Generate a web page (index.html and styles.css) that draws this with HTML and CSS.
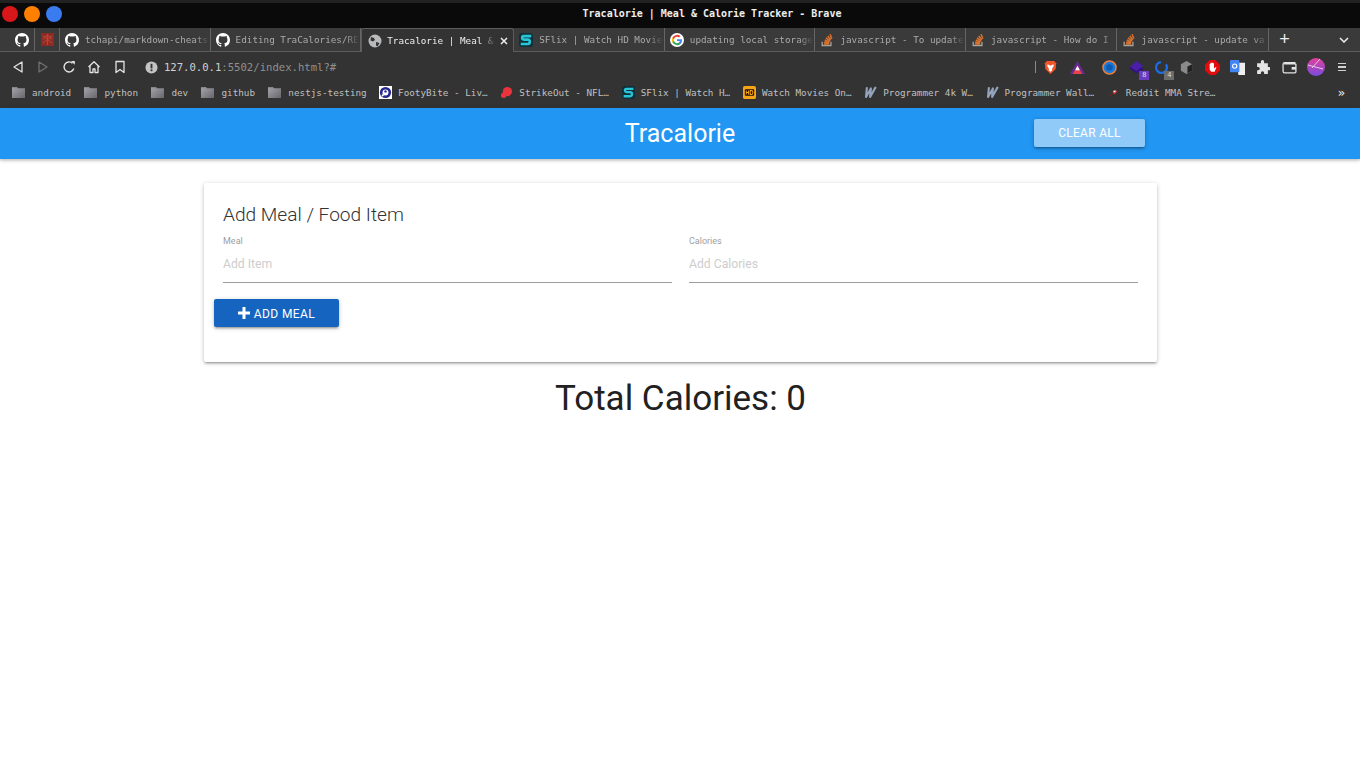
FILE: index.html
```html
<!DOCTYPE html>
<html lang="en">
<head>
<meta charset="utf-8">
<title>Tracalorie | Meal &amp; Calorie Tracker</title>
<link rel="stylesheet" href="styles.css">
</head>
<body>
<svg class="defs" width="0" height="0" aria-hidden="true">
  <defs>
    <linearGradient id="fold" x1="0" y1="0" x2="1" y2="1"><stop offset="0" stop-color="#a5a5ab"/><stop offset="1" stop-color="#66666c"/></linearGradient>
    <linearGradient id="dribble" x1="0" y1="0" x2="0" y2="1"><stop offset="0" stop-color="#e0409a"/><stop offset="1" stop-color="#7a4ce0"/></linearGradient>
    <symbol id="gh" viewBox="0 0 16 16"><path fill="#fff" d="M8 0C3.58 0 0 3.58 0 8c0 3.54 2.29 6.53 5.47 7.59.4.07.55-.17.55-.38 0-.19-.01-.82-.01-1.49-2.01.37-2.53-.49-2.69-.94-.09-.23-.48-.94-.82-1.13-.28-.15-.68-.52-.01-.53.63-.01 1.08.58 1.23.82.72 1.21 1.87.87 2.33.66.07-.52.28-.87.51-1.07-1.78-.2-3.64-.89-3.64-3.95 0-.87.31-1.59.82-2.15-.08-.2-.36-1.02.08-2.12 0 0 .67-.21 2.2.82.64-.18 1.32-.27 2-.27s1.36.09 2 .27c1.53-1.04 2.2-.82 2.2-.82.44 1.1.16 1.92.08 2.12.51.56.82 1.27.82 2.15 0 3.07-1.87 3.75-3.65 3.95.29.25.54.73.54 1.48 0 1.07-.01 1.93-.01 2.2 0 .21.15.46.55.38A8 8 0 0 0 16 8c0-4.42-3.58-8-8-8z"/></symbol>
    <symbol id="so" viewBox="0 0 16 16"><path fill="none" stroke="#a8a29c" stroke-width="1.500" d="M2.500 10v4.300h10V10"/><path fill="none" stroke="#d9702b" stroke-width="1.800" d="M4.600 12.600h5.800M4.800 10.400l5.700 1M5.500 8l5.300 2.400M6.900 5.600l4.600 3.600M8.900 3.400l3.400 4.600M11.500 1.500l2 5"/></symbol>
    <symbol id="sflix" viewBox="0 0 16 16"><rect width="16" height="16" rx="3" fill="#10303a"/><path fill="none" stroke="#29c5d6" stroke-width="3" d="M14 3.500H5.500C3 3.500 3 7 5.500 7.500h5c2.500.5 2.500 5-.5 5H2"/></symbol>
    <symbol id="wall" viewBox="0 0 16 16"><path fill="none" stroke="#93a3bb" stroke-width="2.600" stroke-linecap="round" stroke-linejoin="round" d="M3.500 2.500 2.500 13.500 8.500 3l-1 10.500L14 2"/></symbol>
    <symbol id="folder" viewBox="0 0 16 14"><path fill="url(#fold)" d="M1 1h5l1.500 1.500H15v10.500H1z"/><path fill="#86868c" d="M1 1h5l1.500 1.500H1z"/></symbol>
  </defs>
</svg>

<div class="browser">
  <div class="titlebar">
    <div class="lights"><span class="light red"></span><span class="light orange"></span><span class="light blue"></span></div>
    <div class="wintitle">Tracalorie | Meal &amp; Calorie Tracker - Brave</div>
  </div>

  <div class="tabstrip">
    <div class="tab pin"><svg class="ico14"><use href="#gh"/></svg></div>
    <div class="tab pin"><svg class="ico13" viewBox="0 0 14 14"><rect width="14" height="14" fill="#8f2a22"/><path fill="none" stroke="#c0453b" stroke-width="1" d="M2 3l10 8M12 3 2 11M7 1v12M3 7a4 4 0 0 1 8 0"/></svg></div>
    <div class="tab"><svg class="ico14"><use href="#gh"/></svg><span class="tabname">tchapi/markdown-cheats</span></div>
    <div class="tab"><svg class="ico14"><use href="#gh"/></svg><span class="tabname">Editing TraCalories/RE</span></div>
    <div class="tab active"><svg class="ico14" viewBox="0 0 14 14"><circle cx="7" cy="7" r="6.500" fill="#b9babc"/><path fill="#333" d="M3 3l3 1 1 2-2 1.500-2.500-1zM8 8l3.500 1-2 3.500-1.500-1z"/></svg><span class="tabname">Tracalorie | Meal &amp;</span><svg class="tabclose" viewBox="0 0 8 8"><path fill="none" stroke="#eee" stroke-width="1.500" d="M1 1l6 6M7 1 1 7"/></svg></div>
    <div class="tab"><svg class="ico14"><use href="#sflix"/></svg><span class="tabname">SFlix | Watch HD Movie</span></div>
    <div class="tab"><svg class="ico14" viewBox="0 0 48 48"><circle cx="24" cy="24" r="24" fill="#fff"/><path fill="#4285f4" d="M41 24.500c0-1.200-.1-2.400-.3-3.500H24v6.800h9.600a8.200 8.200 0 0 1-3.500 5.400v4.400h5.700C39.100 34.500 41 29.900 41 24.500z"/><path fill="#34a853" d="M24 42c4.700 0 8.700-1.600 11.800-4.400l-5.700-4.400c-1.600 1.100-3.700 1.700-6.100 1.700-4.700 0-8.600-3.100-10-7.400H8.100v4.500A18 18 0 0 0 24 42z"/><path fill="#fbbc05" d="M14 27.500a10.700 10.700 0 0 1 0-7V16H8.100a18 18 0 0 0 0 16z"/><path fill="#ea4335" d="M24 13.100c2.600 0 5 .9 6.800 2.700l5.100-5.100A18 18 0 0 0 8.100 16l5.900 4.500c1.400-4.300 5.300-7.400 10-7.400z"/></svg><span class="tabname">updating local storage</span></div>
    <div class="tab"><svg class="ico14"><use href="#so"/></svg><span class="tabname">javascript - To update</span></div>
    <div class="tab"><svg class="ico14"><use href="#so"/></svg><span class="tabname">javascript - How do I</span></div>
    <div class="tab lasttab"><svg class="ico14"><use href="#so"/></svg><span class="tabname">javascript - update va</span></div>
    <div class="newtab">+</div>
    <svg class="chev" viewBox="0 0 10 6"><path fill="none" stroke="#eee" stroke-width="1.500" d="M1 1l4 4 4-4"/></svg>
  </div>

  <div class="toolbar">
    <svg class="tool" viewBox="0 0 14 14"><path fill="none" stroke="#e4e4e4" stroke-width="1.300" stroke-linejoin="round" d="M11 2v10L3 7z"/></svg>
    <svg class="tool" viewBox="0 0 14 14"><path fill="none" stroke="#707070" stroke-width="1.300" stroke-linejoin="round" d="M3 2v10l8-5z"/></svg>
    <svg class="tool" viewBox="0 0 14 14"><path fill="none" stroke="#e4e4e4" stroke-width="1.400" d="M11.800 8.500A5 5 0 1 1 10.500 3.300"/><path fill="#e4e4e4" d="M9 1h3.800v3.800z"/></svg>
    <svg class="tool" viewBox="0 0 14 14"><path fill="none" stroke="#e4e4e4" stroke-width="1.300" stroke-linejoin="round" d="M1.500 7 7 1.800 12.500 7M3 6v6.500h3V9h2v3.500h3V6"/></svg>
    <svg class="tool" viewBox="0 0 14 14"><path fill="none" stroke="#e4e4e4" stroke-width="1.300" stroke-linejoin="round" d="M3 1.500h8v11L7 9.500l-4 3z"/></svg>
    <div class="address">
      <svg class="info" viewBox="0 0 14 14"><circle cx="7" cy="7" r="6.500" fill="#c4c4c4"/><rect x="6" y="3" width="2" height="5" fill="#333"/><rect x="6" y="9" width="2" height="2" fill="#333"/></svg>
      <span class="host">127.0.0.1</span><span class="path">:5502/index.html?#</span>
    </div>
    <div class="exts">
      <span class="extsep"></span>
      <svg class="ext brave" viewBox="0 0 14 16"><path fill="#f1562b" d="M3 1h8l2 2.500-.5 6L7 15 1.500 9.500 1 3.500z"/><path fill="#fff" d="M4 4.500 7 6l3-1.500.5 2L8.500 9.500 9 11l-2 1.500L5 11l.5-1.500-2-3z"/></svg>
      <svg class="ext bat" viewBox="0 0 16 14"><path fill="#662d91" d="M8 0l8 14H0z"/><path fill="#e8424b" d="M8 5l5 9H3z"/><path fill="#fff" d="M8 5l2.500 5h-5z"/></svg>
      <svg class="ext ring" viewBox="0 0 16 16"><circle cx="8" cy="8" r="7" fill="#1e78d8"/><circle cx="8" cy="8" r="7" fill="none" stroke="#e9803f" stroke-width="1.600"/><circle cx="8" cy="8" r="3.500" fill="#0b5bb0"/></svg>
      <div class="badged purple"><svg class="ext" viewBox="0 0 16 14"><path fill="#2f1480" d="M0 7.500l8 6 8-5-8-5z"/><path fill="#4a1fa8" d="M1 6l7-6 7 5-7 6z"/></svg><span class="badge bpurple">8</span></div>
      <div class="badged bluer"><svg class="ext" viewBox="0 0 16 16"><circle cx="8" cy="8" r="5.800" fill="none" stroke="#1a6fe8" stroke-width="2.400" stroke-dasharray="26 6"/></svg><span class="badge bgrey">4</span></div>
      <svg class="ext cube" viewBox="0 0 14 16"><path fill="#8a8a8a" d="M7 1l6 3.500v7L7 15l-6-3.500v-7z"/><path fill="#222" d="M8 7l5-2.500v7L8 14z"/></svg>
      <svg class="ext hand" viewBox="0 0 16 16"><path fill="#e30b0b" d="M5 0h6l5 5v6l-5 5H5l-5-5V5z"/><path fill="#fff" d="M5 6.500V4h1v2V3h1.200v3V2.800h1.200V6V3.500h1.200V9L11.500 7.500l.7.500-2 4.500H6.500L5 10z"/></svg>
      <svg class="ext gt" viewBox="0 0 16 16"><path fill="#eee" d="M7 3h9v13H9z"/><rect width="10" height="13" rx="1" fill="#4285f4"/><circle cx="5" cy="6.500" r="2.300" fill="none" stroke="#fff" stroke-width="1.200"/></svg>
      <svg class="ext puzzle" viewBox="0 0 14 14"><path fill="#e4e4e4" d="M5.500 1.500a1.500 1.500 0 0 1 3 0V3H12v3.500h1a1.500 1.500 0 0 1 0 3h-1V13H8.500v-1a1.500 1.500 0 0 0-3 0v1H2V9.500h1a1.500 1.500 0 0 0 0-3H2V3h3.500z"/></svg>
      <svg class="ext wallet" viewBox="0 0 14 12"><path fill="none" stroke="#e4e4e4" stroke-width="1.200" d="M12 2.500V1.500H2.500C1 1.500 1 2.500 1 3v6.500c0 1 .5 1.500 1.500 1.500H12c.8 0 1-.5 1-1V3.500c0-.6-.4-1-1-1H2"/><rect x="9" y="5.500" width="4" height="2.500" fill="#e4e4e4"/></svg>
      <svg class="avatar" viewBox="0 0 18 18"><circle cx="9" cy="9" r="9" fill="url(#dribble)"/><path fill="none" stroke="#f3d5e6" stroke-width=".9" d="M1 7 16 11M5 10 13 1"/></svg>
      <div class="burger"><span></span><span></span><span></span></div>
    </div>
  </div>

  <div class="bookmarks">
    <div class="bm"><svg class="bmfolder"><use href="#folder"/></svg><span>android</span></div>
    <div class="bm"><svg class="bmfolder"><use href="#folder"/></svg><span>python</span></div>
    <div class="bm"><svg class="bmfolder"><use href="#folder"/></svg><span>dev</span></div>
    <div class="bm"><svg class="bmfolder"><use href="#folder"/></svg><span>github</span></div>
    <div class="bm"><svg class="bmfolder"><use href="#folder"/></svg><span>nestjs-testing</span></div>
    <div class="bm"><svg class="bmicon" viewBox="0 0 14 14"><rect width="14" height="14" fill="#fff"/><circle cx="7" cy="7" r="6" fill="#26268c"/><circle cx="7" cy="7" r="3.200" fill="#fff"/><circle cx="7" cy="5.800" r="1.300" fill="#26268c"/><circle cx="4" cy="10" r="1.200" fill="#fff"/></svg><span class="cut">FootyBite - Liv…</span></div>
    <div class="bm"><svg class="bmicon" viewBox="0 0 14 14"><circle cx="8" cy="6" r="5" fill="#e8343c"/><circle cx="4" cy="10" r="3" fill="#e8343c"/></svg><span class="cut">StrikeOut - NFL…</span></div>
    <div class="bm"><svg class="bmicon"><use href="#sflix"/></svg><span class="cut">SFlix | Watch H…</span></div>
    <div class="bm"><svg class="bmicon" viewBox="0 0 14 14"><rect width="14" height="14" rx="2" fill="#f7a414"/><rect x="2" y="3.500" width="10" height="7" rx="1" fill="#111"/><path fill="none" stroke="#f7a414" stroke-width="1.100" d="M3.500 4.800v4.400M6 4.800v4.400M3.500 7H6M7.800 4.800v4.400h1.200c2.200 0 2.200-4.400 0-4.400z"/></svg><span class="cut">Watch Movies On…</span></div>
    <div class="bm"><svg class="bmicon"><use href="#wall"/></svg><span class="cut">Programmer 4k W…</span></div>
    <div class="bm"><svg class="bmicon"><use href="#wall"/></svg><span class="cut">Programmer Wall…</span></div>
    <div class="bm"><svg class="bmicon" viewBox="0 0 14 14"><path fill="none" stroke="#6e2222" stroke-width="1.200" d="M3 11 6 8"/><path fill="#e6393f" d="M6 7l3-3 2 2-3 3z"/><rect x="7" y="5" width="2" height="1.600" fill="#fff"/></svg><span class="cut">Reddit MMA Stre…</span></div>
    <div class="bmmore">»</div>
  </div>
</div>

<header class="appbar">
  <div class="appbar-in">
    <span></span>
    <a class="brand">Tracalorie</a>
    <button class="clear" type="button">CLEAR ALL</button>
  </div>
</header>

<main class="content">
  <section class="card">
    <h2 class="card-title">Add Meal / Food Item</h2>
    <form class="fields">
      <div class="field">
        <label class="field-label" for="meal">Meal</label>
        <input class="field-input" id="meal" type="text" placeholder="Add Item">
      </div>
      <div class="field">
        <label class="field-label" for="cal">Calories</label>
        <input class="field-input" id="cal" type="text" placeholder="Add Calories">
      </div>
    </form>
    <button class="add" type="button"><svg class="plus" viewBox="0 0 12 12"><path fill="#fff" d="M4.500 0h3v4.500H12v3H7.500V12h-3V7.500H0v-3h4.500z"/></svg><span class="add-label">ADD MEAL</span></button>
  </section>
  <h3 class="total">Total Calories: 0</h3>
</main>
</body>
</html>
```
FILE: styles.css
```css
* { box-sizing: border-box; }
html, body { margin: 0; padding: 0; background: #fff; }
body { height: 768px; overflow: hidden; font-family: Roboto, "Liberation Sans", sans-serif; }
.defs { position: absolute; }

.browser { font-family: "DejaVu Sans Mono", "Liberation Mono", monospace; font-size: 9.3px; color: #c0c0c0; background: #333; }

.titlebar { height: 28px; background: #0a0a0a; border-top: 3px solid #222; padding-bottom: 3px; display: grid; grid-template-columns: 1fr auto 1fr; align-items: center; }
.lights { display: flex; gap: 6px; padding-left: 2px; }
.light { width: 16px; height: 16px; border-radius: 50%; }
.red { background: #d8171a; }
.orange { background: #ff8000; }
.blue { background: #3a7bf0; }
.wintitle { grid-column: 2; color: #eee; font-size: 10px; font-weight: bold; padding-left: 64px; padding-bottom: 1px; }

.tabstrip { height: 24px; display: flex; align-items: stretch; padding-left: 11px; background: #3a3a3a; border-bottom: 1px solid #5c5c5c; }
.tab { width: 150.600px; display: flex; align-items: center; gap: 6px; padding: 0 0 0 5px; border-right: 1px solid #666; overflow: hidden; }
.tab.pin { width: 25px; padding: 0 0 0 6px; }
.tab.pin:first-child { width: 24px; padding-left: 4px; }
.tab.lasttab { width: 152px; }
.tabname { flex: 1; overflow: hidden; white-space: nowrap; color: #aaa; -webkit-mask-image: linear-gradient(to right, #000 88%, transparent 100%); mask-image: linear-gradient(to right, #000 88%, transparent 100%); }
.tab.active { background: #333; border: 1px solid #5c5c5c; border-bottom: 0; margin: 0 0 -1px 0; border-radius: 3px 3px 0 0; width: 153px; padding: 0 5px 0 6px; gap: 5px; }
.tab.active .tabname { color: #eee; }
.tabclose { width: 8px; height: 8px; flex: none; }
.ico14 { width: 14px; height: 14px; flex: none; }
.ico13 { width: 13px; height: 13px; flex: none; }
.newtab { width: 32px; text-align: center; color: #eee; font-size: 18px; line-height: 22px; font-family: "Liberation Sans", sans-serif; }
.chev { width: 10px; height: 6px; align-self: center; margin-left: 38px; }

.toolbar { height: 28px; display: flex; align-items: center; padding: 2px 0 0 11px; gap: 11.400px; }
.tool { width: 14px; height: 14px; flex: none; }
.address { display: flex; align-items: center; margin-left: 7px; width: 886px; color: #909090; font-size: 10.600px; }
.info { width: 13px; height: 13px; margin-right: 6px; flex: none; }
.host { color: #d0d0d0; }
.exts { display: flex; align-items: center; margin-left: -7px; }
.extsep { width: 1px; height: 12px; background: #8a8a8a; margin-right: 7px; }
.ext { width: 15px; height: 15px; flex: none; }
.brave { margin-right: 12px; }
.bat { margin-right: 17px; }
.ring { margin-right: 12px; }
.badged { position: relative; width: 15px; height: 15px; margin-right: 10px; }
.badge { position: absolute; right: -5px; bottom: -5px; width: 10px; height: 9px; font-size: 7px; line-height: 9px; text-align: center; color: #ddd; }
.bpurple { background: #6a3cc0; }
.bgrey { background: #6c6c6c; }
.cube { margin-right: 11px; }
.hand { margin-right: 10px; }
.gt { margin-right: 10px; }
.puzzle { margin-right: 12px; }
.wallet { margin-right: 10px; }
.avatar { width: 18px; height: 18px; flex: none; margin-right: 13px; }
.burger { width: 8px; display: flex; flex-direction: column; gap: 2px; }
.burger span { height: 1.500px; background: #cfcfcf; }

.bookmarks { height: 28px; display: flex; align-items: center; padding: 0 0 3px 11px; gap: 12.300px; }
.bm { display: flex; align-items: center; gap: 6px; white-space: nowrap; color: #c0c0c0; }
.bmfolder { width: 15px; height: 13px; flex: none; }
.bmicon { width: 13px; height: 13px; flex: none; }
.cut { width: 90px; }
.bmmore { margin-left: auto; margin-right: 15px; color: #eee; font-size: 12px; }

.appbar { height: 51px; background: #2196f3; box-shadow: 0 2px 2px 0 rgba(0,0,0,.14), 0 1px 5px 0 rgba(0,0,0,.12); position: relative; }
.appbar-in { width: calc(70% + 1px); height: 100%; margin: 0 0 0 204px; display: grid; grid-template-columns: 1fr auto 1fr; align-items: center; padding-right: 12px; }
.brand { color: #fff; font-size: 25px; font-weight: 400; padding-left: 11px; }
.clear { justify-self: end; width: 111px; height: 28px; border: 0; border-radius: 2px; background: #90caf9; color: #fff; font: 400 12px Roboto, sans-serif; letter-spacing: .3px; box-shadow: 0 2px 2px 0 rgba(0,0,0,.14), 0 3px 1px -2px rgba(0,0,0,.12), 0 1px 5px 0 rgba(0,0,0,.2); margin-top: -1px; }

.content { width: calc(70% + 1px); margin: 24px 0 0 204px; }
.card { height: 179px; padding: 19px; background: #fff; border-radius: 2px; box-shadow: 0 2px 2px 0 rgba(0,0,0,.14), 0 3px 1px -2px rgba(0,0,0,.12), 0 1px 5px 0 rgba(0,0,0,.2); }
.card-title { margin: 0; font-size: 19.100px; font-weight: 300; color: #333; line-height: 25px; }
.fields { display: grid; grid-template-columns: 1fr 1fr; column-gap: 17px; margin-top: 9px; }
.field { display: flex; flex-direction: column; }
.field-label { font-size: 9px; line-height: 11px; color: #9e9e9e; }
.field-input { height: 32px; border: 0; border-bottom: 1px solid #9e9e9e; outline: 0; padding: 0 0 6px; background: transparent; font: 400 12.200px Roboto, sans-serif; margin-top: 4px; }
.field-input::placeholder { color: #cdcdcd; opacity: 1; }
.add { display: flex; align-items: center; justify-content: center; gap: 4px; width: 125px; height: 28px; margin: 16px 0 0 -9px; border: 0; border-radius: 2px; background: #1565c0; color: #fff; font: 400 12px Roboto, sans-serif; letter-spacing: .4px; box-shadow: 0 2px 2px 0 rgba(0,0,0,.14), 0 3px 1px -2px rgba(0,0,0,.12), 0 1px 5px 0 rgba(0,0,0,.2); }
.add-label { padding-top: 2px; }
.plus { width: 12px; height: 12px; margin-top: -1px; }
.total { margin: 15px 0 0; font-size: 35px; font-weight: 400; line-height: 44px; text-align: center; color: #212121; }
```
